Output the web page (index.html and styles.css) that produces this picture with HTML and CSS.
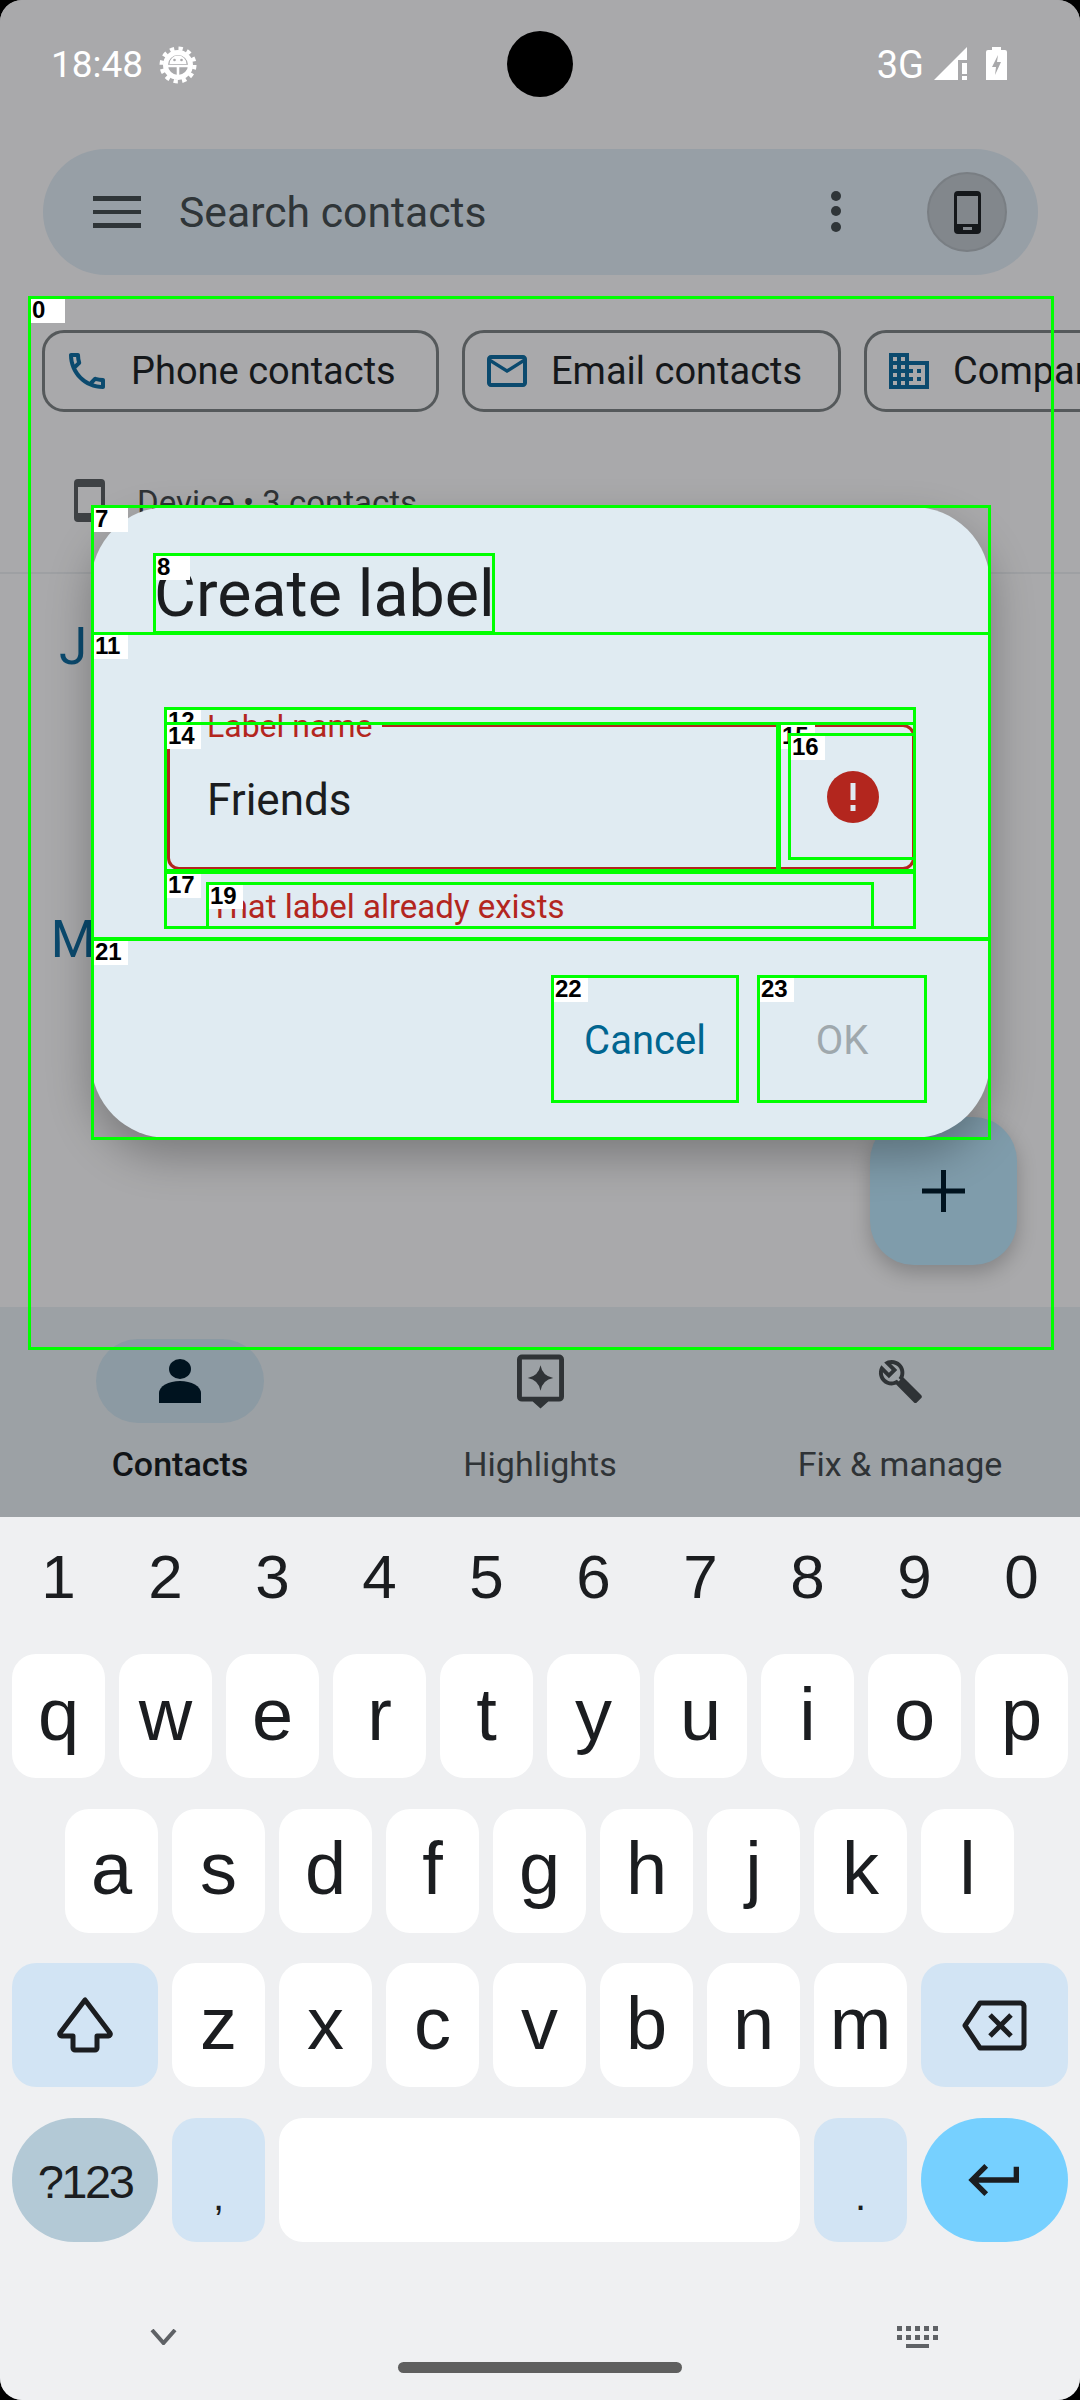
FILE: index.html
```html
<!DOCTYPE html>
<html lang="en">
<head>
<meta charset="utf-8">
<title>Contacts - Create label</title>
<link rel="stylesheet" href="styles.css">
</head>
<body>
<div class="screen">
  <main class="app">
    <div class="status">
      <div class="status-left">
        <span class="clock">18:48</span>
        <svg class="ic-debug" viewBox="0 0 38 38"><circle cx="19" cy="19" r="16.500" fill="none" stroke="#fff" stroke-width="4" stroke-dasharray="4.300 4.340"/><circle cx="19" cy="19" r="12.500" fill="none" stroke="#fff" stroke-width="5"/><path d="M10.500 18a8.500 8.500 0 0 1 17 0z" fill="#fff"/><circle cx="15.500" cy="14" r="1.300" fill="#a9a9ab"/><circle cx="22.500" cy="14" r="1.300" fill="#a9a9ab"/><path d="M8 20h22M19 20v11" stroke="#fff" stroke-width="2.600"/></svg>
      </div>
      <div class="status-right">
        <span class="net">3G</span>
        <svg class="ic-signal" viewBox="0 0 34 33"><path d="M0 33 33 0v13h-9v20z" fill="#fff"/><path d="M28 16h5v11h-5zM28 29h5v4h-5z" fill="#fff"/></svg>
        <svg class="ic-batt" viewBox="0 0 21 33"><path d="M6 0h9v3h4a2 2 0 0 1 2 2v28H0V5a2 2 0 0 1 2-2h4z" fill="#fff"/><path d="M12 8 6 20h4l-1 8 6-13h-4z" fill="#a9a9ab"/></svg>
      </div>
    </div>

    <div class="search">
      <svg class="ic-menu" viewBox="0 0 48 32"><path d="M0 0h48v5H0zM0 14h48v4H0zM0 27h48v5H0z" fill="#2f3538"/></svg>
      <span class="search-text">Search contacts</span>
      <svg class="ic-more" viewBox="0 0 10 42"><circle cx="5" cy="5" r="5"/><circle cx="5" cy="20" r="5"/><circle cx="5" cy="36" r="5"/></svg>
      <div class="avatar">
        <svg class="ic-device" viewBox="0 0 27 43"><path fill-rule="evenodd" d="M4 0h19a4 4 0 0 1 4 4v35a4 4 0 0 1-4 4H4a4 4 0 0 1-4-4V4a4 4 0 0 1 4-4zM3 5v28h21V5zM9 36v3h9v-3z"/></svg>
      </div>
    </div>

    <div class="chips">
      <div class="chip chip-phone">
        <svg class="chip-ic" viewBox="0 0 24 24"><path d="M6.540 5c.06.89.21 1.760.45 2.590l-1.200 1.200c-.41-1.200-.67-2.470-.76-3.790h1.510m9.860 12.020c.85.24 1.720.39 2.600.45v1.490c-1.320-.09-2.590-.35-3.800-.75l1.200-1.190M7.500 3H4c-.55 0-1 .45-1 1 0 9.390 7.610 17 17 17 .55 0 1-.45 1-1v-3.490c0-.55-.45-1-1-1-1.240 0-2.450-.2-3.570-.57-.1-.04-.21-.05-.31-.05-.26 0-.51.1-.71.29l-2.200 2.200c-2.830-1.450-5.150-3.760-6.590-6.590l2.200-2.200c.28-.28.36-.67.25-1.020C8.700 6.450 8.500 5.250 8.500 4c0-.55-.45-1-1-1z"/></svg>
        <span>Phone contacts</span>
      </div>
      <div class="chip chip-email">
        <svg class="chip-ic" viewBox="0 0 24 24"><path d="M22 6c0-1.100-.9-2-2-2H4c-1.100 0-2 .9-2 2v12c0 1.100.9 2 2 2h16c1.100 0 2-.9 2-2V6zm-2 0l-8 5-8-5h16zm0 12H4V8l8 5 8-5v10z"/></svg>
        <span>Email contacts</span>
      </div>
      <div class="chip chip-company">
        <svg class="chip-ic" viewBox="0 0 24 24"><path d="M12 7V3H2v18h20V7H12zM6 19H4v-2h2v2zm0-4H4v-2h2v2zm0-4H4V9h2v2zm0-4H4V5h2v2zm4 12H8v-2h2v2zm0-4H8v-2h2v2zm0-4H8V9h2v2zm0-4H8V5h2v2zm10 12h-8v-2h2v-2h-2v-2h2v-2h-2V9h8v10zm-2-8h-2v2h2v-2zm0 4h-2v2h2v-2z"/></svg>
        <span>Company contacts</span>
      </div>
    </div>

    <div class="device-head">
      <svg class="ic-device-head" viewBox="0 0 31 43"><path fill-rule="evenodd" d="M4 0h23a4 4 0 0 1 4 4v35a4 4 0 0 1-4 4H4a4 4 0 0 1-4-4V4a4 4 0 0 1 4-4zM4 8v26h23V8z"/></svg>
      <span>Device • 3 contacts</span>
    </div>
    <div class="divider"></div>
    <div class="letter letter-j">J</div>
    <div class="letter letter-m">M</div>

    <nav class="nav">
      <div class="nav-item nav-active">
        <div class="nav-pill">
          <svg class="nav-ic" viewBox="0 0 42 44"><ellipse cx="21" cy="10" rx="11" ry="10" fill="#00131f"/><path d="M0 44V34a21 12 0 0 1 42 0v10z" fill="#00131f"/></svg>
        </div>
        <span>Contacts</span>
      </div>
      <div class="nav-item">
        <div class="nav-pill nav-pill-off">
          <svg class="nav-ic" viewBox="0 0 48 55"><path fill="#2f3336" fill-rule="evenodd" d="M5 0h38a5 5 0 0 1 5 5v38a5 5 0 0 1-5 5H32l-8 7-8-7H5a5 5 0 0 1-5-5V5a5 5 0 0 1 5-5zM5 5v38h38V5z"/><path fill="#2f3336" d="M24 11q2 11 13 13-11 2-13 13-2-11-13-13 11-2 13-13z"/></svg>
        </div>
        <span>Highlights</span>
      </div>
      <div class="nav-item">
        <div class="nav-pill nav-pill-off">
          <svg class="nav-ic" viewBox="0 0 24 24"><path fill="#2f3336" d="M22.610 18.990l-9.080-9.080c.93-2.340.45-5.100-1.440-7C9.790.61 6.210.4 3.660 2.260L7.500 6.110 6.080 7.520 2.250 3.690C.39 6.230.6 9.820 2.900 12.110c1.860 1.860 4.570 2.350 6.890 1.480l9.110 9.110c.39.39 1.020.39 1.410 0l2.300-2.300c.4-.38.4-1.010 0-1.410zm-3 1.600l-9.460-9.460c-.61.45-1.290.72-2 .82-1.360.2-2.790-.21-3.830-1.250C3.370 9.760 2.930 8.500 3 7.260l3.090 3.090 4.240-4.240-3.090-3.090c1.240-.07 2.490.37 3.440 1.310 1.080 1.080 1.490 2.570 1.240 3.960-.12.71-.42 1.370-.88 1.960l9.450 9.450-.88.88z"/><path d="M11.500 11.500l9 9" stroke="#2f3336" stroke-width="3.400"/></svg>
        </div>
        <span>Fix &amp; manage</span>
      </div>
    </nav>
  </main>

  <section class="keyboard">
    <div class="digits">
      <span>1</span><span>2</span><span>3</span><span>4</span><span>5</span><span>6</span><span>7</span><span>8</span><span>9</span><span>0</span>
    </div>
    <div class="rows">
      <div class="row">
        <div class="key">q</div><div class="key">w</div><div class="key">e</div><div class="key">r</div><div class="key">t</div><div class="key">y</div><div class="key">u</div><div class="key">i</div><div class="key">o</div><div class="key">p</div>
      </div>
      <div class="row row-home">
        <div class="key">a</div><div class="key">s</div><div class="key">d</div><div class="key">f</div><div class="key">g</div><div class="key">h</div><div class="key">j</div><div class="key">k</div><div class="key">l</div>
      </div>
      <div class="row">
        <div class="key key-wide key-fn">
          <svg class="ic-shift" viewBox="0 0 58 56"><path d="M29 3 4 36a2 2 0 0 0 2 3h11v12a2 2 0 0 0 2 2h20a2 2 0 0 0 2-2V39h11a2 2 0 0 0 2-3z" fill="none" stroke="#1b1d20" stroke-width="5" stroke-linejoin="round"/></svg>
        </div>
        <div class="key">z</div><div class="key">x</div><div class="key">c</div><div class="key">v</div><div class="key">b</div><div class="key">n</div><div class="key">m</div>
        <div class="key key-end key-fn">
          <svg class="ic-del" viewBox="0 0 65 51"><path d="M18 3h41a4 4 0 0 1 3 3v39a4 4 0 0 1-3 3H18L3 25.500z" fill="none" stroke="#1b1d20" stroke-width="5" stroke-linejoin="round"/><path d="M28 15l21 21M49 15 28 36" stroke="#1b1d20" stroke-width="5"/></svg>
        </div>
      </div>
      <div class="row">
        <div class="key key-wide key-sym">?123</div>
        <div class="key key-fn key-punct">,</div>
        <div class="key key-space"></div>
        <div class="key key-fn key-punct">.</div>
        <div class="key key-end key-enter">
          <svg class="ic-enter" viewBox="0 0 24 24"><path fill="#1b1d20" d="M19 7v4H5.830l3.580-3.590L8 6l-6 6 6 6 1.410-1.410L5.830 13H21V7z"/></svg>
        </div>
      </div>
    </div>
    <div class="kb-tools">
      <svg class="ic-chevron" viewBox="0 0 27 16"><path d="M2 1 13.500 14 25 1" fill="none" stroke="#5f6266" stroke-width="4"/></svg>
      <svg class="ic-kbd" viewBox="0 0 41 22"><path fill="#5f6266" d="M0 0h5v5H0zM9 0h5v5H9zM18 0h5v5h-5zM27 0h5v5h-5zM36 0h5v5h-5zM0 9h5v5H0zM9 9h5v5H9zM18 9h5v5h-5zM27 9h5v5h-5zM36 9h5v5h-5zM9 18h23v4H9z"/></svg>
    </div>
    <div class="home-pill"></div>
  </section>

  <div class="camera"></div>
  <div class="fab">
    <svg class="ic-plus" viewBox="0 0 43 42"><path d="M19 0h5v18.500h19v5H24V42h-5V23.500H0v-5h19z" fill="#00131f"/></svg>
  </div>

  <div class="dialog">
    <h1 class="dialog-title">Create label</h1>
    <div class="dialog-body">
      <div class="field">
        <label class="field-label">Label name</label>
        <span class="field-value">Friends</span>
        <svg class="ic-error" viewBox="0 0 52 52"><circle cx="26" cy="26" r="26" fill="#b3261e"/><path d="M23.500 12h5v17h-5zM23.500 34h5v6h-5z" fill="#e0ebf2"/></svg>
      </div>
      <div class="field-error">That label already exists</div>
    </div>
    <div class="dialog-actions">
      <button class="btn btn-cancel">Cancel</button>
      <button class="btn btn-ok">OK</button>
    </div>
  </div>

  <div class="box b0"><i>0</i></div>
  <div class="box b7"><i>7</i></div>
  <div class="box b8"><i>8</i></div>
  <div class="box b11"><i>11</i></div>
  <div class="box b12"><i>12</i></div>
  <div class="box b14"><i>14</i></div>
  <div class="box b15"><i>15</i></div>
  <div class="box b16"><i>16</i></div>
  <div class="box b17"><i>17</i></div>
  <div class="box b19"><i>19</i></div>
  <div class="box b21"><i>21</i></div>
  <div class="box b22"><i>22</i></div>
  <div class="box b23"><i>23</i></div>
</div>
</body>
</html>
```

FILE: styles.css
```css
* { box-sizing: border-box; }
html, body { margin: 0; padding: 0; background: #000; }
body { width: 1080px; height: 2400px; overflow: hidden; font-family: Roboto, "Noto Sans", sans-serif; }
svg { display: block; flex: none; }

.screen { position: relative; width: 1080px; height: 2400px; overflow: hidden; border-radius: 22px; display: flex; flex-direction: column; background: #a9a9ab; }

.app { height: 1517px; flex: none; display: flex; flex-direction: column; background: #a9a9ab; overflow: hidden; }

.status { height: 149px; flex: none; display: flex; justify-content: space-between; padding: 46px 73px 0 51px; color: #fff; }
.status-left { display: flex; align-items: flex-start; gap: 16px; }
.clock { font-size: 37px; line-height: 38px; }
.ic-debug { width: 38px; height: 38px; }
.status-right { display: flex; align-items: flex-start; }
.net { font-size: 38px; line-height: 38px; margin-right: 10px; }
.ic-signal { width: 34px; height: 33px; margin: 1px 18px 0 0; }
.ic-batt { width: 21px; height: 33px; margin-top: 1px; }

.search { margin: 0 42px 0 43px; height: 126px; flex: none; border-radius: 63px; background: #979fa6; display: flex; align-items: center; padding: 0 31px 0 50px; }
.ic-menu { width: 48px; height: 32px; margin-right: 38px; }
.search-text { font-size: 42.700px; color: #2f3538; flex: 1; }
.ic-more { width: 10px; height: 42px; fill: #2f3538; margin-right: 86px; }
.avatar { width: 80px; height: 80px; border-radius: 50%; background: #82878c; border: 2px solid #797e83; display: flex; align-items: center; justify-content: center; }
.ic-device { width: 27px; height: 43px; fill: #15181b; }

.chips { display: flex; gap: 23px; margin: 55px 0 0 42px; height: 82px; flex: none; }
.chip { flex: none; height: 82px; border: 3px solid #55595b; border-radius: 22px; display: flex; align-items: center; gap: 20px; padding-left: 18px; font-size: 38px; color: #15181b; white-space: nowrap; }
.chip-ic { width: 48px; height: 48px; fill: #0b4a6e; }
.chip-phone { width: 397px; }
.chip-email { width: 379px; }
.chip-company { width: 440px; }

.device-head { height: 46px; margin: 67px 0 0 74px; flex: none; display: flex; align-items: flex-start; gap: 32px; font-size: 33px; line-height: 48px; color: #2f3336; }
.ic-device-head { width: 31px; height: 43px; fill: #3e4144; }

.divider { height: 2px; flex: none; background: #9ea0a3; margin-top: 47px; }

.letter { width: 60px; margin-left: 43px; flex: none; height: 56px; line-height: 56px; text-align: center; font-size: 51px; color: #0b4a6e; }
.letter-j { margin-top: 45px; }
.letter-m { margin-top: 237px; }

.nav { margin-top: auto; height: 210px; flex: none; background: #9ca1a5; display: flex; }
.nav-item { flex: 1; display: flex; flex-direction: column; align-items: center; padding-top: 32px; font-size: 34px; line-height: 40px; color: #2f3336; }
.nav-active { color: #111417; font-weight: 500; }
.nav-pill { width: 168px; height: 84px; border-radius: 42px; background: #8c9aa3; display: flex; align-items: center; justify-content: center; margin-bottom: 21px; }
.nav-pill-off { background: transparent; }
.nav-ic { width: 47px; height: 47px; }
.nav-active .nav-ic { width: 42px; height: 44px; }
.nav-pill-off .nav-ic { height: 55px; }
.nav-item:last-child .nav-ic { height: 47px; }

.keyboard { flex: 1; background: #eff0f2; display: flex; flex-direction: column; font-family: "Liberation Sans", Roboto, sans-serif; }
.digits { display: flex; gap: 14px; padding-left: 12px; height: 137px; flex: none; padding-top: 25px; }
.digits span { width: 93px; height: 70px; line-height: 70px; text-align: center; font-size: 62px; color: #1b1d20; }
.rows { display: flex; flex-direction: column; gap: 30.500px; flex: none; }
.row { display: flex; gap: 14px; padding-left: 12px; height: 124px; }
.row-home { padding-left: 65px; }
.key { width: 93px; height: 100%; border-radius: 24px; background: #fff; display: flex; align-items: center; justify-content: center; font-size: 74px; color: #1b1d20; padding-bottom: 4px; }
.key-wide { width: 146px; }
.key-end { width: 147px; padding-bottom: 0; }
.key-fn { background: #d2e4f4; }
.key-space { width: 521px; }
.key-sym { background: #b3c9d6; border-radius: 62px; font-size: 47px; letter-spacing: -2.500px; padding: 4px 0 0; }
.key-enter { background: #76d0ff; border-radius: 62px; }
.key-punct { font-size: 40px; align-items: flex-end; padding-bottom: 23px; }
.ic-shift { width: 58px; height: 56px; }
.key-wide.key-fn { padding-bottom: 0; }
.ic-del { width: 65px; height: 51px; }
.ic-enter { width: 64px; height: 64px; }

.kb-tools { display: flex; justify-content: space-between; padding: 84px 142px 0 150px; height: 118px; flex: none; }
.ic-chevron { width: 27px; height: 16px; margin-top: 3px; }
.ic-kbd { width: 41px; height: 22px; }
.home-pill { width: 284px; height: 11px; border-radius: 6px; background: #5f5f5f; margin: 2px auto 0; }

.camera { position: absolute; left: 507px; top: 31px; width: 66px; height: 66px; border-radius: 50%; background: #000; }

.fab { position: absolute; left: 870px; top: 1117px; width: 147px; height: 148px; border-radius: 44px; background: #7f9cab; box-shadow: 0 8px 20px rgba(0,0,0,.22); display: flex; align-items: center; justify-content: center; }
.ic-plus { width: 43px; height: 42px; }

.dialog { position: absolute; left: 91px; top: 507px; width: 899px; height: 631px; border-radius: 77px; background: #e0ebf2; box-shadow: 0 18px 44px rgba(0,0,0,.28); display: flex; flex-direction: column; }
.dialog-title { margin: 0; height: 126px; flex: none; padding: 47px 0 0 63px; font-size: 64.500px; line-height: 80px; font-weight: 400; color: #1b1d20; }
.dialog-body { height: 306px; flex: none; padding: 91px 75px 0 76px; }
.field { position: relative; height: 146px; border: 3px solid #b3261e; border-radius: 12px; display: flex; align-items: center; justify-content: space-between; padding: 0 33px 0 37px; }
.field-label { position: absolute; left: 27px; top: -19px; padding: 0 10px; background: #e0ebf2; font-size: 32px; line-height: 36px; color: #b3261e; }
.field-value { font-size: 44px; color: #1b1d20; margin-top: 5px; }
.ic-error { width: 52px; height: 52px; }
.field-error { padding: 17px 0 0 43px; font-size: 33px; line-height: 40px; color: #b3261e; }
.dialog-actions { flex: 1; display: flex; justify-content: flex-end; align-items: flex-start; gap: 20px; padding: 37px 64px 0 0; }
.btn { height: 128px; border: 0; background: transparent; padding: 0; font-family: inherit; font-size: 40px; font-weight: 400; }
.btn-cancel { width: 186px; color: #006590; }
.btn-ok { width: 168px; color: #9fa8ad; }

.box { position: absolute; border: 3px solid #0f0; }
.box i { position: absolute; left: 0; top: 0; width: 34px; height: 24px; background: #fff; color: #000; font: normal bold 24px/21px "Liberation Sans", sans-serif; padding-left: 1px; }
.b0 { left: 28px; top: 296px; width: 1026px; height: 1054px; }
.b7 { left: 91px; top: 505px; width: 900px; height: 635px; }
.b8 { left: 153px; top: 553px; width: 342px; height: 81px; }
.b11 { left: 91px; top: 632px; width: 900px; height: 308px; }
.b12 { left: 164px; top: 707px; width: 752px; height: 222px; }
.b14 { left: 164px; top: 722px; width: 615px; height: 150px; }
.b15 { left: 778px; top: 722px; width: 138px; height: 150px; }
.b16 { left: 788px; top: 733px; width: 128px; height: 127px; }
.b17 { left: 164px; top: 871px; width: 752px; height: 58px; }
.b19 { left: 206px; top: 882px; width: 668px; height: 47px; }
.b21 { left: 91px; top: 938px; width: 900px; height: 202px; }
.b22 { left: 551px; top: 975px; width: 188px; height: 128px; }
.b23 { left: 757px; top: 975px; width: 170px; height: 128px; }
```
